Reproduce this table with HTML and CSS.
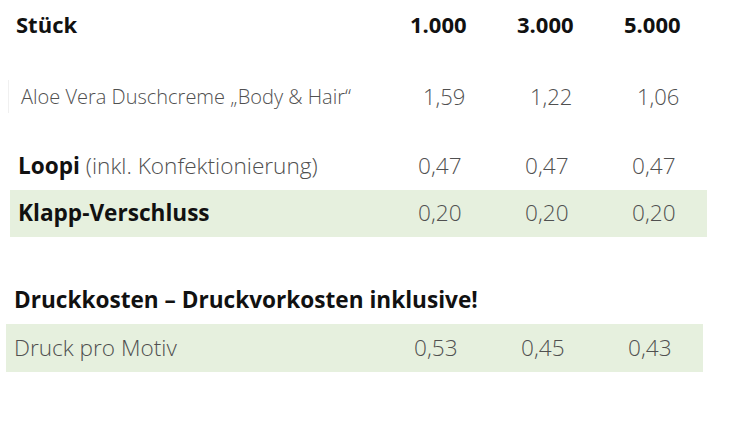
FILE: index.html
```html
<!DOCTYPE html>
<html lang="de">
<head>
<meta charset="utf-8">
<title>Preise</title>
<link rel="stylesheet" href="styles.css">
</head>
<body>
<div class="table t1">
  <div class="row head">
    <div class="label">Stück</div>
    <div class="val">1.000</div>
    <div class="val">3.000</div>
    <div class="val">5.000</div>
  </div>
  <div class="row aloe">
    <div class="label">Aloe Vera Duschcreme „Body &amp; Hair“</div>
    <div class="val">1,59</div>
    <div class="val">1,22</div>
    <div class="val">1,06</div>
  </div>
  <div class="row loopi">
    <div class="label"><b>Loopi</b> (inkl. Konfektionierung)</div>
    <div class="val">0,47</div>
    <div class="val">0,47</div>
    <div class="val">0,47</div>
  </div>
  <div class="row green">
    <div class="label"><b>Klapp-Verschluss</b></div>
    <div class="val">0,20</div>
    <div class="val">0,20</div>
    <div class="val">0,20</div>
  </div>
</div>
<div class="table t2">
  <div class="row title">
    <div class="label"><b>Druckkosten – Druckvorkosten inklusive!</b></div>
  </div>
  <div class="row green">
    <div class="label">Druck pro Motiv</div>
    <div class="val">0,53</div>
    <div class="val">0,45</div>
    <div class="val">0,43</div>
  </div>
</div>
</body>
</html>
```

FILE: styles.css
```css
html, body {
  margin: 0;
  padding: 0;
  background: #ffffff;
}
body {
  font-family: "Open Sans", "DejaVu Sans", sans-serif;
  font-size: 22.6px;
  font-weight: 300;
  color: #505050;
}
b {
  font-weight: 700;
  color: #111111;
}
.table {
  width: 697px;
}
.t1 {
  margin-left: 10px;
}
.t2 {
  margin-left: 6px;
  margin-top: 39px;
}
.row {
  display: grid;
  grid-template-columns: 400px 107px 107px 83px;
  align-items: center;
  height: 48px;
  padding-bottom: 2px;
  box-sizing: border-box;
  white-space: nowrap;
}
.label {
  padding-left: 8px;
}
.val {
  padding-left: 8px;
}
.head {
  height: 50px;
  font-size: 22px;
  font-weight: 700;
  color: #111111;
}
.head .label {
  padding-left: 6px;
}
.head .val {
  padding-left: 0;
}
.aloe {
  margin-top: 23px;
  font-size: 20px;
}
.aloe .label {
  margin-left: -2px;
  padding-left: 12px;
  border-left: 1px solid #f0f0f0;
  line-height: 33px;
}
.aloe .val {
  padding-left: 13px;
  font-size: 22px;
}
.loopi {
  margin-top: 21px;
}
.green {
  background: #e6f0de;
  height: 47px;
}
.t2 .green {
  height: 48px;
}
.title .label {
  padding-left: 8px;
}
```
